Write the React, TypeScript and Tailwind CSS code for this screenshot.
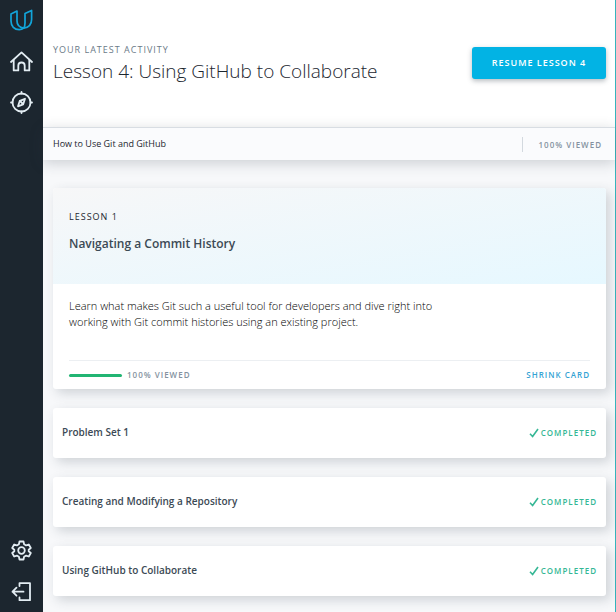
import type { ReactNode } from "react";

const LESSONS = [
  "Problem Set 1",
  "Creating and Modifying a Repository",
  "Using GitHub to Collaborate",
];

function NavLink({ label, children }: { label: string; children: ReactNode }) {
  return (
    <a href="#" aria-label={label} className="block h-6 w-6 text-[#e3edf3]">
      <svg
        viewBox="0 0 24 24"
        className="h-6 w-6"
        fill="none"
        stroke="currentColor"
        strokeWidth="1.8"
        strokeLinecap="round"
        strokeLinejoin="round"
        aria-hidden="true"
      >
        {children}
      </svg>
    </a>
  );
}

function Sidebar() {
  return (
    <nav className="flex w-[43px] shrink-0 flex-col items-start justify-between bg-[#1c262f] pt-2 pb-2 pl-[9px]">
      <div className="flex flex-col items-center gap-[17px]">
        <a href="#" aria-label="Udacity" className="block h-6 w-6">
          <svg
            viewBox="0 0 24 24"
            className="h-6 w-6"
            fill="none"
            stroke="#12a5da"
            strokeWidth="1.7"
            strokeLinejoin="round"
            aria-hidden="true"
          >
            <path d="M8 3 2 6v7c0 5.200 3.400 8.700 8.200 8.700 1.800 0 3.300-.5 4.500-1.500C10.600 19.400 8 17 8 13Z" />
            <path d="M14.700 20.200c4.700-.8 7.900-3.900 7.900-8.700V2.400L16 5.400v9.600c0 2-.4 3.700-1.300 5.200Z" />
          </svg>
        </a>
        <NavLink label="Home">
          <path d="M2 13 12.500 3.400 23 13" />
          <path d="M4.700 11.200v10.200h4.600v-4.700a3.200 3.200 0 0 1 6.400 0v4.700h4.600V11.200" />
        </NavLink>
        <NavLink label="Explore">
          <circle cx="12.500" cy="12.500" r="9" />
          <path d="M12.500 2v1.500M12.500 21.500V23M2 12.500h1.500M21.500 12.500H23" />
          <path d="m16 8.800-1.800 5.500-5.200 2 1.800-5.500Z" />
          <path d="m11 11 3 3" />
        </NavLink>
      </div>
      <div className="flex flex-col items-center gap-[17px]">
        <NavLink label="Settings">
          <path d="M10.500 2.500h4l.6 2.700 2 1.200 2.700-.9 2 3.500-2.100 1.800v1.400l2.100 1.800-2 3.500-2.700-.9-2 1.200-.6 2.700h-4l-.6-2.700-2-1.200-2.700.9-2-3.500 2.100-1.800v-1.400L3.200 9l2-3.500 2.700.9 2-1.200Z" />
          <circle cx="12.500" cy="11.500" r="3.300" />
        </NavLink>
        <NavLink label="Log out">
          <path d="M10.500 6V3.200H21v17H10.500v-2.800" />
          <path d="M14.500 11.700H3.500M7.500 7.700l-4 4 4 4" />
        </NavLink>
      </div>
    </nav>
  );
}

function Header() {
  return (
    <header className="flex h-[127px] items-center justify-between bg-white pr-[9px] pb-[2px] pl-[10px]">
      <div>
        <p className="text-[9px] leading-4 font-medium tracking-[1px] text-[#6b7a88]">
          YOUR LATEST ACTIVITY
        </p>
        <h1 className="mt-px text-[19px] leading-6 font-light text-[#1c262f]">
          Lesson 4: Using GitHub to Collaborate
        </h1>
      </div>
      <button
        type="button"
        className="h-8 w-[134px] shrink-0 rounded-[3px] bg-[#02b3e4] text-[9px] font-semibold tracking-[1px] text-white shadow-[0_2px_5px_rgba(46,61,73,0.35)]"
      >
        RESUME LESSON 4
      </button>
    </header>
  );
}

function CourseBar() {
  return (
    <div className="flex h-[33px] items-center justify-between border-t border-[#d8dde3] bg-[#fafbfd] pr-[13px] pl-[10px] shadow-[0_3px_14px_rgba(46,61,73,0.22)]">
      <span className="text-[9px] leading-4 text-[#1c262f]">How to Use Git and GitHub</span>
      <div className="flex items-center gap-4">
        <span className="h-[15px] w-px bg-[#d3d9df]" />
        <span className="pt-[2px] text-[8px] leading-4 font-semibold tracking-[1px] text-[#8492a0]">
          100% VIEWED
        </span>
      </div>
    </div>
  );
}

function LessonCard() {
  return (
    <article className="overflow-hidden rounded-[3px] bg-white shadow-[4px_4px_12px_rgba(46,61,73,0.2)]">
      <div className="h-24 bg-linear-to-br from-[#f7f7f8] to-[#e6f8ff] px-4 pt-[21px]">
        <p className="text-[9px] leading-4 font-medium tracking-[1px] text-[#1c262f]">LESSON 1</p>
        <h2 className="mt-[9px] text-[12px] leading-5 font-semibold text-[#3c4a55]">
          Navigating a Commit History
        </h2>
      </div>
      <div className="px-4 pt-[14px]">
        <p className="max-w-[390px] text-[11px] leading-4 font-light text-black">
          Learn what makes Git such a useful tool for developers and dive right into working with Git
          commit histories using an existing project.
        </p>
        <div className="mt-[30px] flex h-[29px] items-center border-t border-[#eceff2]">
          <span className="h-[3px] w-[53px] rounded-full bg-[#22b573]" />
          <span className="ml-[5px] text-[8px] leading-4 font-semibold tracking-[1px] text-[#8492a0]">
            100% VIEWED
          </span>
          <button
            type="button"
            className="ml-auto text-[8px] leading-4 font-semibold tracking-[1px] text-[#35a3d4]"
          >
            SHRINK CARD
          </button>
        </div>
      </div>
    </article>
  );
}

function LessonRow({ title }: { title: string }) {
  return (
    <article className="flex h-[50px] items-center justify-between rounded-[3px] bg-white px-[9px] shadow-[4px_4px_12px_rgba(46,61,73,0.2)]">
      <h2 className="pb-[2px] text-[10px] leading-4 font-semibold text-[#3c4a55]">{title}</h2>
      <span className="flex items-center gap-[2px] text-[8px] leading-4 font-semibold tracking-[1px] text-[#35b795]">
        <svg
          viewBox="0 0 10 10"
          className="h-[10px] w-[10px]"
          fill="none"
          stroke="currentColor"
          strokeWidth="1.6"
          aria-hidden="true"
        >
          <path d="m1 5.800 2.600 2.700L9 1" />
        </svg>
        COMPLETED
      </span>
    </article>
  );
}

export default function App() {
  return (
    <div className="flex min-h-screen bg-[#f7f8fa] font-['Open_Sans',sans-serif]">
      <Sidebar />
      <div className="min-w-0 flex-1 border-r border-[#35b5bd]">
        <Header />
        <CourseBar />
        <main className="flex flex-col gap-[19px] pt-7 pr-[9px] pb-4 pl-[10px]">
          <LessonCard />
          {LESSONS.map((title) => (
            <LessonRow key={title} title={title} />
          ))}
        </main>
      </div>
    </div>
  );
}
